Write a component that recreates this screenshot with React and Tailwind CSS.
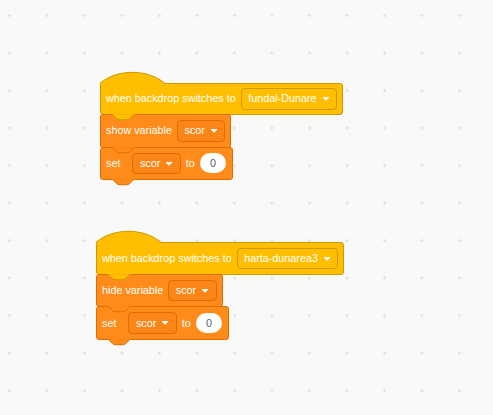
const YELLOW = { fill: '#FFBF00', line: '#CC9900', field: '#FFBF00' }
const ORANGE = { fill: '#FF8C1A', line: '#DB6E00', field: '#F98616' }

const SCRIPTS = [
  {
    pos: 'left-[100px] top-[82.5px]',
    trigger: 'fundal-Dunare',
    show: 'show variable',
  },
  {
    pos: 'left-[96px] top-[242.3px]',
    trigger: 'harta-dunarea3',
    show: 'hide variable',
  },
]

function Arrow() {
  return (
    <svg width="8" height="5.5" viewBox="0 0 8 6" className="shrink-0">
      <path
        d="M1,1 L7,1 Q8,1 7.3,1.8 L4.6,4.6 Q4,5.2 3.4,4.6 L0.7,1.8 Q0,1 1,1Z"
        fill="#fff"
      />
    </svg>
  )
}

function Dropdown({ label, tone }) {
  return (
    <div
      className={`flex h-[21.5px] shrink-0 items-center gap-[5px] rounded-[4px] border pl-[6.5px] pr-[6.5px] ${
        tone === YELLOW
          ? 'border-[#CC9900] bg-[#FFBF00]'
          : 'border-[#DB6E00] bg-[#F98616]'
      }`}
    >
      <span className="whitespace-nowrap">{label}</span>
      <Arrow />
    </div>
  )
}

// bottom tab that plugs into the next block
function Tab({ tone }) {
  return (
    <svg
      width="24.3"
      height="6.4"
      viewBox="0 0 36 9.5"
      preserveAspectRatio="none"
      className="absolute left-[9.5px] top-full z-10 overflow-visible"
    >
      <path
        d="M0,0.5 c2,0 3,1 4,2 l4,4 c1,1 2,2 4,2 h12 c2,0 3,-1 4,-2 l4,-4 c1,-1 2,-2 4,-2"
        fill={tone.fill}
        stroke={tone.line}
        strokeWidth="1"
        vectorEffect="non-scaling-stroke"
      />
      <rect x="0.5" y="-1.5" width="35" height="2" fill={tone.fill} />
    </svg>
  )
}

function HatBlock({ label }) {
  return (
    <div className="relative flex h-[32.5px] items-center gap-[5px] rounded-[3px] rounded-tl-none border border-[#CC9900] bg-[#FFBF00] pl-[5px] pr-[5px]">
      <svg
        width="64.8"
        height="12.67"
        viewBox="0 -1 96 19"
        preserveAspectRatio="none"
        className="absolute left-[-1px] top-[-11.83px] overflow-visible"
      >
        <path d="M0,18 L0,16 C25,-6 71,-6 96,16 L96,18 Z" fill="#FFBF00" />
        <path
          d="M0,17 L0,16 C25,-6 71,-6 96,16"
          fill="none"
          stroke="#CC9900"
          strokeWidth="1"
          vectorEffect="non-scaling-stroke"
        />
      </svg>
      <span className="relative whitespace-nowrap">when backdrop switches to</span>
      <Dropdown label={label} tone={YELLOW} />
      <Tab tone={YELLOW} />
    </div>
  )
}

function StackBlock({ children }) {
  return (
    <div className="relative mt-[-1px] flex h-[33.5px] items-center rounded-[3px] border border-[#DB6E00] bg-[#FF8C1A] pl-[5px] pr-[5px]">
      {children}
      <Tab tone={ORANGE} />
    </div>
  )
}

function Script({ pos, trigger, show }) {
  return (
    <div
      className={`absolute ${pos} flex flex-col items-start font-['Liberation_Sans',Arial,sans-serif] text-[10.8px] leading-none text-white`}
    >
      <HatBlock label={trigger} />
      <StackBlock>
        <span className="mr-[5px] whitespace-nowrap">{show}</span>
        <Dropdown label="scor" tone={ORANGE} />
      </StackBlock>
      <StackBlock>
        <span className="mr-[12px]">set</span>
        <Dropdown label="scor" tone={ORANGE} />
        <span className="ml-[5px] mr-[5px]">to</span>
        <div className="flex h-[20px] w-[26.5px] items-center justify-center rounded-full bg-white text-[#575E75]">
          0
        </div>
        <span className="w-px" />
      </StackBlock>
    </div>
  )
}

export default function App() {
  return (
    <div className="relative h-[415px] w-[493px] overflow-hidden bg-[#F9F9F9]">
      <svg className="absolute inset-0" width="493" height="415">
        <defs>
          <pattern id="grid" width="37.5" height="37.5" patternUnits="userSpaceOnUse">
            <path d="M8,15.5 H11 M9.5,14 V17" stroke="#D9D9D9" strokeWidth="1" />
          </pattern>
        </defs>
        <rect width="493" height="415" fill="url(#grid)" />
      </svg>
      {SCRIPTS.map((s) => (
        <Script key={s.trigger} {...s} />
      ))}
    </div>
  )
}
